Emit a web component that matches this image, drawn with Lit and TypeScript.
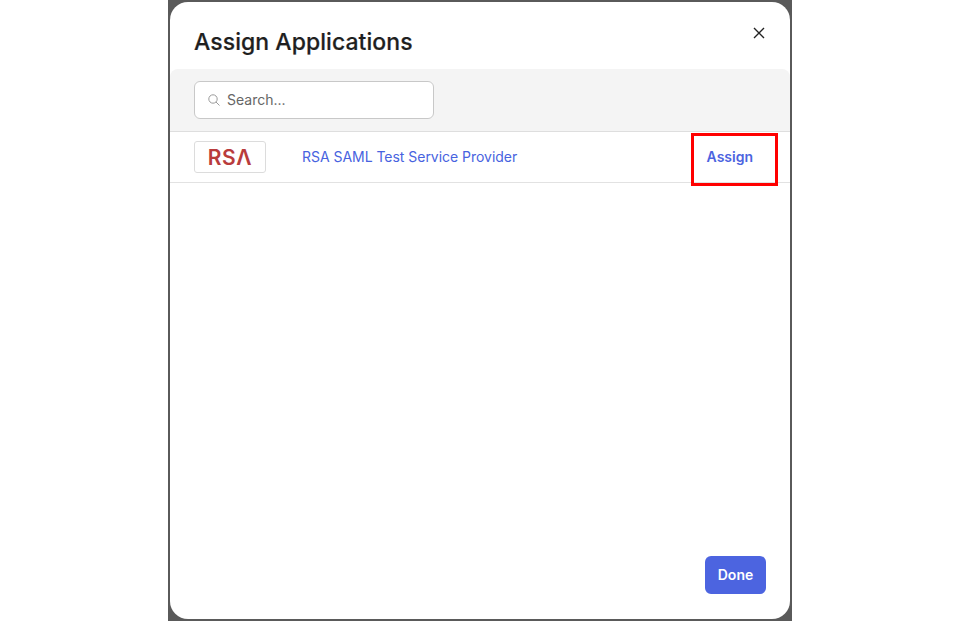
import { LitElement, html, css } from "lit";
import { customElement } from "lit/decorators.js";

@customElement("app-root")
export class AppRoot extends LitElement {
  static styles = css`
    :host { display: flex; justify-content: center; width: 960px; height: 621px; background: #fff; font-family: Inter, "Liberation Sans", sans-serif; overflow: hidden; }
    .frame { width: 624px; height: 621px; box-sizing: border-box; background: #5a5a5a; padding: 2px; }
    .modal { position: relative; height: 617px; background: #fff; border-radius: 18px; display: flex; flex-direction: column; overflow: hidden; }
    .head { height: 67px; flex: none; display: flex; align-items: flex-start; justify-content: space-between; padding: 0 24px; box-sizing: border-box; }
    h1 { margin: 24px 0 0; font-size: 23px; line-height: 32px; font-weight: 500; color: #1f1f1f; letter-spacing: 0.05px; -webkit-text-stroke: 0.2px #1f1f1f; }
    .close { margin: 25px 1px 0 0; width: 12px; height: 12px; display: block; }
    .search { height: 63px; flex: none; box-sizing: border-box; background: #f4f4f4; border-bottom: 1px solid #dedede; border-radius: 8px 8px 0 0; padding: 12px 24px 0; }
    .box { width: 240px; height: 38px; box-sizing: border-box; background: #fff; border: 1px solid #c8c8c8; border-radius: 6px; display: flex; align-items: center; gap: 7px; padding: 0 0 1px 13px; font-size: 14px; color: #666; }
    .box svg { width: 12px; height: 12px; flex: none; margin-top: 1px; }
    .row { height: 51px; flex: none; box-sizing: border-box; border-bottom: 1px solid #e2e2e2; display: flex; align-items: center; padding: 0 24px; }
    .logo { width: 72px; height: 32px; box-sizing: border-box; border: 1px solid #dcdcdc; border-radius: 3px; display: flex; align-items: center; justify-content: center; font-size: 21px; font-weight: 600; letter-spacing: 0.6px; color: #b93c3c; }
    .name { margin-left: 36px; flex: 1; font-size: 14px; color: #4763e0; padding-bottom: 1px; letter-spacing: -0.03px; }
    .assign { font-size: 14px; font-weight: 600; color: #4c64e0; margin-right: 13px; padding-bottom: 1px; }
    .mark { position: absolute; left: 521px; top: 131px; width: 87px; height: 53px; box-sizing: border-box; border: 3px solid #f00; }
    .foot { margin-top: auto; display: flex; justify-content: flex-end; padding: 0 24px 25px; }
    .done { width: 61px; height: 38px; border: 0; border-radius: 6px; background: #4c64e0; color: #fff; font: 600 14px Inter, "Liberation Sans", sans-serif; padding: 0 0 1px; }
  `;

  render() {
    return html`<div class="frame"><div class="modal">
      <div class="head">
        <h1>Assign Applications</h1>
        <svg class="close" viewBox="0 0 12 12" fill="none" stroke="#222" stroke-width="1.4"><path d="M1 1l10 10M11 1L1 11" /></svg>
      </div>
      <div class="search"><div class="box">
        <svg viewBox="0 0 12 12" fill="none" stroke="#9a9a9a" stroke-width="1"><circle cx="5" cy="5" r="4.2" /><path d="M8 8l3.5 3.5" /></svg>
        <span>Search...</span>
      </div></div>
      <div class="row">
        <div class="logo">RSΛ</div>
        <div class="name">RSA SAML Test Service Provider</div>
        <div class="assign">Assign</div>
      </div>
      <div class="mark"></div>
      <div class="foot"><button class="done">Done</button></div>
    </div></div>`;
  }
}
